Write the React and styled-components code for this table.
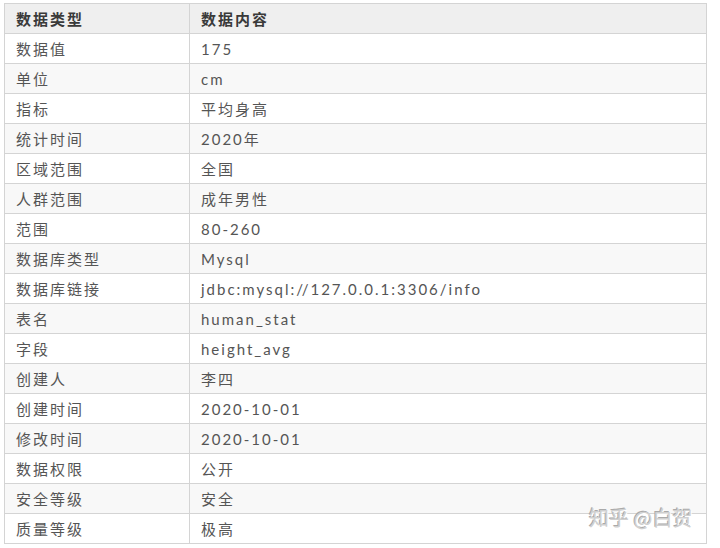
import React from "react";
import styled, { createGlobalStyle } from "styled-components";

const rows = [
  ["数据值", "175"],
  ["单位", "cm"],
  ["指标", "平均身高"],
  ["统计时间", "2020年"],
  ["区域范围", "全国"],
  ["人群范围", "成年男性"],
  ["范围", "80-260"],
  ["数据库类型", "Mysql"],
  ["数据库链接", "jdbc:mysql://127.0.0.1:3306/info"],
  ["表名", "human_stat"],
  ["字段", "height_avg"],
  ["创建人", "李四"],
  ["创建时间", "2020-10-01"],
  ["修改时间", "2020-10-01"],
  ["数据权限", "公开"],
  ["安全等级", "安全"],
  ["质量等级", "极高"],
];

const GlobalStyle = createGlobalStyle`
  body {
    margin: 0;
    background: #fff;
    font-family: "Lato", "Noto Sans CJK SC", sans-serif;
  }
`;

const Page = styled.div`
  position: relative;
  width: 720px;
  height: 548px;
  padding: 3px 0 0 4px;
  box-sizing: border-box;
`;

const Table = styled.table`
  width: 703px;
  border-collapse: collapse;
  table-layout: fixed;
  color: #555;
  font-size: 15px;
  letter-spacing: 2px;
`;

const Row = styled.tr`
  height: 30px;
  background: ${(p) => (p.$head ? "#efefef" : p.$odd ? "#f8f8f8" : "#fff")};
`;

const Cell = styled.td`
  border: 1px solid #d4d4d4;
  padding: 0 0 0 11px;
  font-weight: ${(p) => (p.$head ? 700 : 400)};
  color: ${(p) => (p.$head ? "#3a3a3a" : "#555")};
  white-space: nowrap;
  line-height: 28px;
`;

const Watermark = styled.div`
  position: absolute;
  left: 589px;
  top: 503px;
  font-family: "Noto Sans CJK SC", sans-serif;
  font-size: 20px;
  color: #d0d0d0;
  letter-spacing: 0;
  text-shadow: 1px 1px 0 #fff, -1px -1px 0 #aaa;
`;

const App = () => {
  return (
    <Page>
      <GlobalStyle />
      <Table>
        <colgroup>
          <col style={{ width: 185 }} />
          <col />
        </colgroup>
        <tbody>
          <Row $head>
            <Cell $head>数据类型</Cell>
            <Cell $head>数据内容</Cell>
          </Row>
          {rows.map(([k, v], i) => (
            <Row key={k} $odd={i % 2 === 1}>
              <Cell>{k}</Cell>
              <Cell>{v}</Cell>
            </Row>
          ))}
        </tbody>
      </Table>
      <Watermark>知乎 @白贺</Watermark>
    </Page>
  );
};

export default App;
